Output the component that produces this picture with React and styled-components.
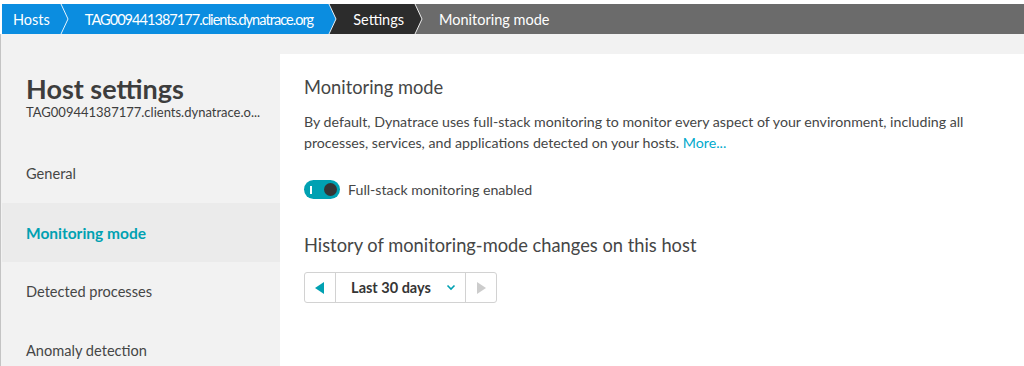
import styled, { createGlobalStyle } from "styled-components";

const GlobalStyle = createGlobalStyle`
  html, body {
    margin: 0;
    padding: 0;
    background: #ffffff;
    font-family: Lato, "Open Sans", Arial, sans-serif;
    color: #454646;
  }
`;

const crumbs = [
  { label: "Hosts", bg: "#0b8de0", next: "#0b8de0" },
  { label: "TAG009441387177.clients.dynatrace.org", bg: "#0b8de0", next: "#2c2c2c", tight: true },
  { label: "Settings", bg: "#2c2c2c", next: "#6b6b6b" },
  { label: "Monitoring mode", bg: "#6b6b6b" },
];

const navItems = ["General", "Monitoring mode", "Detected processes", "Anomaly detection"];

function Chevron({ from, to }) {
  return (
    <svg width="10" height="30" viewBox="0 0 10 30" style={{ background: to, display: "block" }}>
      <polygon points="0,0 2,0 9,15 2,30 0,30" fill={from} />
      <polyline points="2,0 9,15 2,30" fill="none" stroke="#ffffff" strokeWidth="1" opacity="0.9" />
    </svg>
  );
}

export default function App() {
  return (
    <Page>
      <GlobalStyle />
      <Breadcrumbs>
        {crumbs.map((c, i) => (
          <Crumb key={c.label} $bg={c.bg} $first={i === 0} $last={!c.next} $tight={c.tight}>
            <span>{c.label}</span>
            {c.next && <Chevron from={c.bg} to={c.next} />}
          </Crumb>
        ))}
      </Breadcrumbs>
      <Body>
        <Sidebar>
          <SideHeader>
            <h1>Host settings</h1>
            <p>TAG009441387177.clients.dynatrace.o...</p>
          </SideHeader>
          <Nav>
            {navItems.map((n) => (
              <NavItem key={n} $active={n === "Monitoring mode"}>
                {n}
              </NavItem>
            ))}
          </Nav>
        </Sidebar>
        <Content>
          <Title>Monitoring mode</Title>
          <Text>
            By default, Dynatrace uses full-stack monitoring to monitor every aspect of your environment, including all
            processes, services, and applications detected on your hosts. <a href="#">More...</a>
          </Text>
          <ToggleRow>
            <Toggle>
              <i />
              <b />
            </Toggle>
            <span>Full-stack monitoring enabled</span>
          </ToggleRow>
          <Title $mt={34}>History of monitoring-mode changes on this host</Title>
          <Timeframe>
            <ArrowBtn>
              <svg width="10" height="12" viewBox="0 0 10 12">
                <polygon points="9,0 9,12 0,6" fill="#00a1b2" />
              </svg>
            </ArrowBtn>
            <RangeBtn>
              Last 30 days
              <svg width="10" height="7" viewBox="0 0 10 7">
                <polyline points="1.5,1.5 5,5 8.5,1.5" fill="none" stroke="#00a1b2" strokeWidth="1.6" />
              </svg>
            </RangeBtn>
            <ArrowBtn>
              <svg width="10" height="12" viewBox="0 0 10 12">
                <polygon points="1,0 1,12 10,6" fill="#cccccc" />
              </svg>
            </ArrowBtn>
          </Timeframe>
        </Content>
      </Body>
    </Page>
  );
}

const Page = styled.div`
  width: 1024px;
  height: 366px;
  overflow: hidden;
  padding-top: 4px;
  box-sizing: border-box;
  display: flex;
  flex-direction: column;
`;

const Breadcrumbs = styled.div`
  display: flex;
  height: 30px;
  margin-left: 2px;
  background: #6b6b6b;
  flex-shrink: 0;
`;

const Crumb = styled.div`
  display: flex;
  align-items: center;
  background: ${(p) => p.$bg};
  color: #ffffff;
  font-size: 14.5px;
  padding-left: ${(p) => (p.$first ? "11px" : "16px")};
  flex: ${(p) => (p.$last ? "1" : "none")};

  span {
    padding-right: ${(p) => (p.$tight ? "14px" : "9px")};
    white-space: nowrap;
    letter-spacing: ${(p) => (p.$tight ? "-0.95px" : "0")};
  }
`;

const Body = styled.div`
  flex: 1;
  display: grid;
  grid-template-columns: 279px 1fr;
  background: #f2f2f2;
  border-left: 1px solid #c4c4c4;
`;

const Sidebar = styled.aside`
  display: flex;
  flex-direction: column;
  padding-left: 1px;
`;

const SideHeader = styled.div`
  height: 110px;
  padding: 39px 0 0 24px;
  box-sizing: border-box;

  h1 {
    margin: 0;
    font-size: 27px;
    line-height: 31px;
    font-weight: 700;
    color: #3d3d3d;
  }

  p {
    margin: -1px 0 0;
    font-size: 13px;
    line-height: 18px;
    color: #3d3d3d;
  }
`;

const Nav = styled.nav`
  display: flex;
  flex-direction: column;
`;

const NavItem = styled.div`
  height: 59px;
  display: flex;
  align-items: center;
  padding-left: 24px;
  font-size: ${(p) => (p.$active ? "15.5px" : "14.6px")};
  font-weight: ${(p) => (p.$active ? 700 : 400)};
  color: ${(p) => (p.$active ? "#00a1b2" : "#454646")};
  background: ${(p) => (p.$active ? "#ebebeb" : "transparent")};
`;

const Content = styled.main`
  background: #ffffff;
  margin-top: 20px;
  padding: 21px 24px 0;
`;

const Title = styled.h2`
  margin: ${(p) => p.$mt || 0}px 0 0;
  font-size: 18.3px;
  line-height: 24px;
  font-weight: 400;
  color: #454646;
`;

const Text = styled.p`
  margin: 12px 0 0;
  font-size: 14.2px;
  line-height: 21px;
  color: #454646;
  max-width: 700px;

  a {
    color: #00a9cc;
    text-decoration: none;
  }
`;

const ToggleRow = styled.div`
  display: flex;
  align-items: center;
  gap: 8px;
  margin-top: 27px;
  font-size: 14.2px;
`;

const Toggle = styled.div`
  width: 36px;
  height: 19px;
  border-radius: 10px;
  background: #00a1b2;
  display: flex;
  align-items: center;
  justify-content: space-between;
  padding: 0 3px 0 6px;
  box-sizing: border-box;

  i {
    width: 2px;
    height: 8px;
    background: #ffffff;
  }

  b {
    width: 13px;
    height: 13px;
    border-radius: 50%;
    background: #353535;
  }
`;

const Timeframe = styled.div`
  display: inline-flex;
  margin-top: 15px;
  height: 31px;
  border: 1px solid #d2d2d2;
  border-radius: 3px;
  box-sizing: border-box;
`;

const ArrowBtn = styled.div`
  width: 30px;
  display: flex;
  align-items: center;
  justify-content: center;
`;

const RangeBtn = styled.div`
  width: 131px;
  display: flex;
  align-items: center;
  justify-content: center;
  gap: 15px;
  padding-left: 6px;
  box-sizing: border-box;
  font-size: 14.5px;
  font-weight: 700;
  color: #353535;
  border-left: 1px solid #d2d2d2;
  border-right: 1px solid #d2d2d2;
`;
